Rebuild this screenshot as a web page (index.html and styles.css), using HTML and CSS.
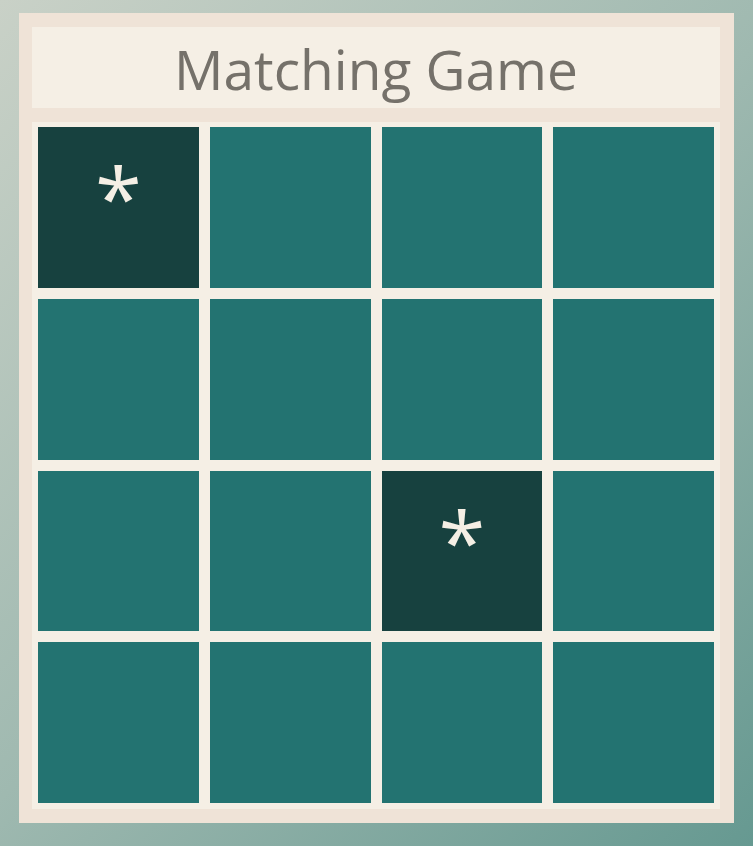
FILE: index.html
```html
<!DOCTYPE html>
<html>
<head>
<meta charset="utf-8">
<link rel="stylesheet" href="styles.css">
</head>
<body>
<div class="frame">
  <h1 class="title">Matching Game</h1>
  <div class="board">
    <div class="card flipped"><span>*</span></div>
    <div class="card"></div>
    <div class="card"></div>
    <div class="card"></div>
    <div class="card"></div>
    <div class="card"></div>
    <div class="card"></div>
    <div class="card"></div>
    <div class="card"></div>
    <div class="card"></div>
    <div class="card flipped"><span>*</span></div>
    <div class="card"></div>
    <div class="card"></div>
    <div class="card"></div>
    <div class="card"></div>
    <div class="card"></div>
  </div>
</div>
</body>
</html>
```
FILE: styles.css
```css
html, body {
  margin: 0;
  padding: 0;
  height: 100%;
}
body {
  background: linear-gradient(135deg, #c9d1c7 0%, #9fb9b0 50%, #669991 100%);
  font-family: "Open Sans", "Noto Sans", sans-serif;
  display: flex;
  justify-content: center;
  align-items: flex-start;
  padding-top: 13px;
  box-sizing: border-box;
}
.frame {
  width: 715px;
  height: 810px;
  box-sizing: border-box;
  background: #efe3d7;
  padding: 14px 14px 14px 13px;
  display: flex;
  flex-direction: column;
  gap: 14px;
}
.title {
  margin: 0;
  height: 81px;
  box-sizing: border-box;
  padding-top: 2px;
  background: #f5efe5;
  color: #75716a;
  font-weight: 400;
  font-size: 55px;
  line-height: 79px;
  text-align: center;
}
.board {
  flex: 1;
  background: #f5efe5;
  padding: 5px 6px 6px 6px;
  display: grid;
  grid-template-columns: repeat(4, 1fr);
  grid-template-rows: repeat(4, 1fr);
  gap: 11px;
}
.card {
  background: #237371;
  display: flex;
  justify-content: center;
  align-items: flex-start;
}
.card.flipped {
  background: #17413f;
}
.card span {
  color: #f5efe5;
  font-size: 85px;
  line-height: 1;
  margin-top: 27px;
}
```
